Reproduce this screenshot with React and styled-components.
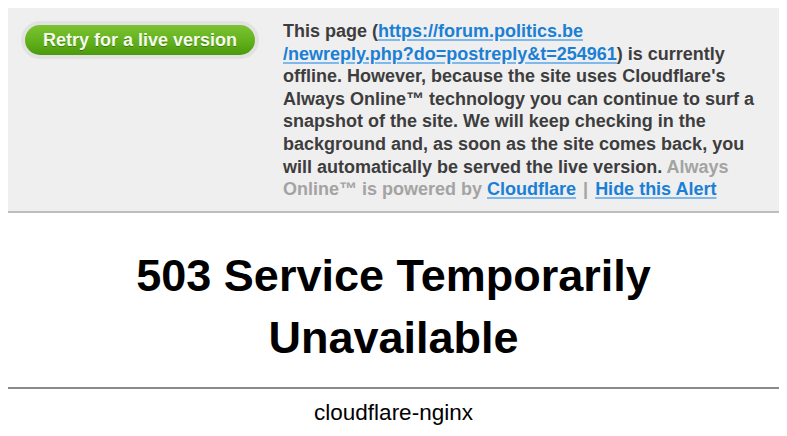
import React from 'react';
import styled, { createGlobalStyle } from 'styled-components';

const GlobalStyle = createGlobalStyle`
  body {
    margin: 8px;
    background: #ffffff;
    font-family: "Liberation Sans", Arial, sans-serif;
  }
`;

const Banner = styled.div`
  display: flex;
  align-items: flex-start;
  gap: 24px;
  padding: 12px 3px 10px 13px;
  background: #efefef;
  border-bottom: 2px solid #bdbdbd;
`;

const ButtonHalo = styled.div`
  flex: none;
  padding: 4px;
  margin-top: 1px;
  background: #e2e2e2;
  border-radius: 20px;
`;

const RetryButton = styled.a`
  display: flex;
  align-items: center;
  justify-content: center;
  width: 230px;
  height: 30px;
  border-radius: 15px;
  background: linear-gradient(to bottom, #7cc332 0%, #62b01c 55%, #4b9a0c 100%);
  color: #f4fbec;
  font-size: 18px;
  font-weight: bold;
  text-decoration: none;
  text-shadow: 0 1px 0 rgba(40, 80, 0, 0.55);
  cursor: pointer;
`;

const Message = styled.p`
  flex: 1;
  margin: 0;
  font-size: 18px;
  line-height: 22.6px;
  font-weight: bold;
  color: #3d3d3d;
`;

const Muted = styled.span`
  color: #a3a3a3;
`;

const Separator = styled.span`
  margin: 0 7px;
  color: #a3a3a3;
`;

const Link = styled.a`
  color: #1b7fd6;
  text-decoration: underline;
  text-decoration-color: #7fb8ea;
  text-decoration-thickness: 2px;
  text-underline-offset: 2px;
`;

const Main = styled.main`
  text-align: center;
`;

const Title = styled.h1`
  margin: 32px auto 0;
  max-width: 660px;
  font-size: 45px;
  line-height: 62px;
  font-weight: bold;
  color: #000;
`;

const Rule = styled.hr`
  margin: 18px 0 0;
  border: none;
  border-top: 2px solid #8a8a8a;
`;

const Footer = styled.div`
  margin-top: 11px;
  font-size: 22.5px;
  color: #000;
`;

export default function App() {
  return (
    <>
      <GlobalStyle />
      <Banner>
        <ButtonHalo>
          <RetryButton>Retry for a live version</RetryButton>
        </ButtonHalo>
        <Message>
          This page (
          <Link href="#">
            https://forum.politics.be<br />/newreply.php?do=postreply&amp;t=254961
          </Link>
          ) is currently offline. However, because the site uses Cloudflare's Always Online™
          technology you can continue to surf a snapshot of the site. We will keep checking in
          the background and, as soon as the site comes back, you will automatically be served
          the live version. <Muted>Always Online™ is powered by</Muted>{' '}
          <Link href="#">Cloudflare</Link><Separator>|</Separator><Link href="#">Hide this Alert</Link>
        </Message>
      </Banner>
      <Main>
        <Title>503 Service Temporarily Unavailable</Title>
        <Rule />
        <Footer>cloudflare-nginx</Footer>
      </Main>
    </>
  );
}
